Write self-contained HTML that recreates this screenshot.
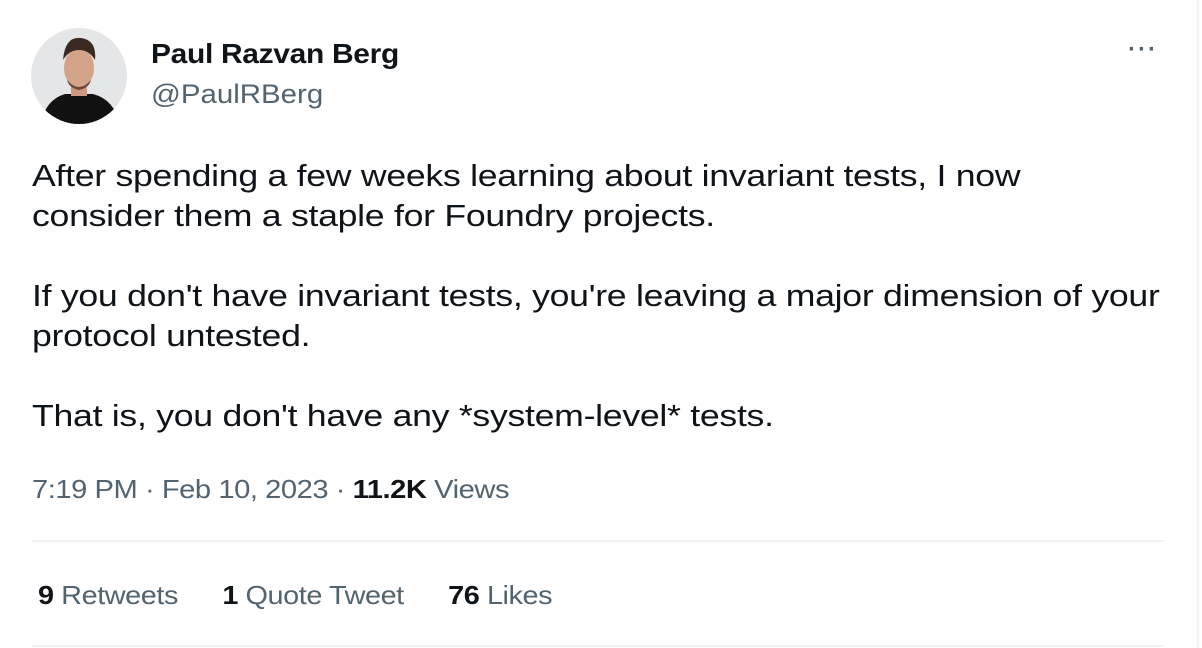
<!DOCTYPE html>
<html><head><meta charset="utf-8"><style>
body{margin:0;width:1202px;height:648px;background:#fff;font-family:"Liberation Sans",sans-serif;position:relative;overflow:hidden;color:#0f1419}
.a{position:absolute;white-space:nowrap;transform-origin:0 0}
.g{color:#536471}
</style></head><body>
<div class="a" style="left:1197px;top:0;width:2px;height:648px;background:#eff3f4"></div>
<svg class="a" style="left:31px;top:28px" width="96" height="96" viewBox="0 0 96 96">
<defs><clipPath id="c"><circle cx="48" cy="48" r="48"/></clipPath></defs>
<g clip-path="url(#c)">
<rect width="96" height="96" fill="#e4e6e8"/>
<path d="M10 96 Q14 72 34 66 L62 66 Q84 72 88 96Z" fill="#111"/>
<rect x="40" y="50" width="16" height="18" fill="#c99a80"/>
<ellipse cx="48" cy="40" rx="15" ry="20" fill="#d4a48a"/>
<path d="M32 32 Q34 8 50 10 Q66 12 64 32 Q58 22 48 22 Q38 22 32 32Z" fill="#3a2a22"/>
<path d="M36 52 Q48 66 60 52 Q58 60 48 62 Q38 60 36 52Z" fill="#6b4a3a"/>
</g></svg>
<div class="a" style="left:151px;top:38px;font-size:28px;font-weight:bold;letter-spacing:-0.3px;transform:scaleX(1.07)">Paul Razvan Berg</div>
<div class="a g" style="left:151px;top:79px;font-size:27px;transform:scaleX(1.09)">@PaulRBerg</div>
<div class="a g" style="left:1128px;top:36px;font-size:24px;font-weight:bold;letter-spacing:2px">···</div>
<div class="a" style="left:32px;top:156px;font-size:31px;line-height:40px;letter-spacing:-0.25px;transform:scaleX(1.15)">After spending a few weeks learning about invariant tests, I now<br>consider them a staple for Foundry projects.<br><br>If you don't have invariant tests, you're leaving a major dimension of your<br>protocol untested.<br><br>That is, you don't have any *system-level* tests.</div>
<div class="a g" style="left:32px;top:474px;font-size:26px;letter-spacing:-0.4px;transform:scaleX(1.12)">7:19 PM · Feb 10, 2023 · <b style="color:#0f1419">11.2K</b> Views</div>
<div class="a" style="left:32px;top:540px;width:1132px;height:2px;background:#eff3f4"></div>
<div class="a g" style="left:38px;top:580px;font-size:26px;letter-spacing:-0.4px;transform:scaleX(1.11)"><b style="color:#0f1419">9</b> Retweets<span style="display:inline-block;width:40px"></span><b style="color:#0f1419">1</b> Quote Tweet<span style="display:inline-block;width:40px"></span><b style="color:#0f1419">76</b> Likes</div>
<div class="a" style="left:32px;top:645px;width:1132px;height:2px;background:#eff3f4"></div>
</body></html>
